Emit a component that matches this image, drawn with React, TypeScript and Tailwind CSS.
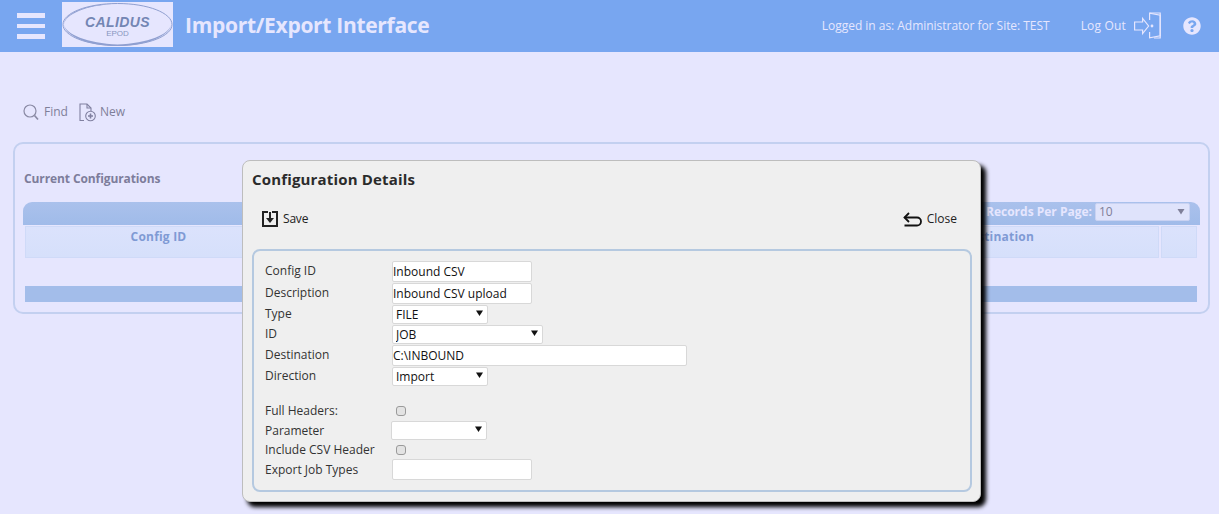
import React from "react";
import { FaQuestionCircle } from "react-icons/fa";

const font = "font-['Open_Sans','Noto_Sans',sans-serif]";

function Logo() {
  return (
    <div className="relative w-[111px] h-[45px] bg-[#e6e6fe] overflow-hidden">
      <svg className="absolute inset-0" width="111" height="45" viewBox="0 0 111 45">
        <path d="M1 22.5C1 11 25 1.5 55.5 1.5S110 11 110 22.5 86 43.5 55.5 43.5 1 34 1 22.5Z" fill="none" stroke="#8f9fd0" strokeWidth="1" />
        <path d="M2 22.5C3 32 26 41.5 55.5 42.5 86 41.5 108 32 109 22.5 108 34 84 44 55.5 44 26 44 3 34 2 22.5Z" fill="#8f9fd0" />
        <path d="M2 22.5C3 12 26 3 50 2.5 26 1.5 2 11 2 22.5Z" fill="#8f9fd0" />
      </svg>
      <div className="absolute left-0 right-0 top-[14px] text-center text-[14px] leading-[13px] font-bold italic tracking-[0.4px] text-[#7486b4] font-['Liberation_Sans',sans-serif]">CALIDUS</div>
      <div className="absolute left-0 right-0 top-[27px] text-center text-[8px] leading-[9px] text-[#8896c0] font-['Liberation_Sans',sans-serif]">EPOD</div>
    </div>
  );
}

function Field({ label, h, children }: { label: string; h: string; children: React.ReactNode }) {
  return (
    <div className={`flex items-center ${h}`}>
      <div className="w-[127px] shrink-0 text-[12px] leading-[16px] text-[#333]">{label}</div>
      {children}
    </div>
  );
}

function TextBox({ w, value }: { w: string; value: string }) {
  return (
    <input
      readOnly
      value={value}
      className={`${w} h-[21px] bg-white border border-[#d8d8d8] rounded-[2px] pl-0 text-[12px] text-[#111] outline-none`}
    />
  );
}

function Pick({ w, value, className = "" }: { w: string; value: string; className?: string }) {
  return (
    <div className={`relative ${w} h-[19px] ${className}`}>
      <select
        defaultValue={value}
        className="block appearance-none w-full h-full bg-white border border-[#d8d8d8] rounded-[2px] pl-[3px] text-[12px] text-[#111] outline-none"
      >
        <option>{value}</option>
      </select>
      <svg className="absolute right-[5px] top-[5px] pointer-events-none" width="7" height="6" viewBox="0 0 7 6">
        <path d="M0 0.5h7L3.5 6z" fill="#111" />
      </svg>
    </div>
  );
}

function Check() {
  return <div className="w-[10px] h-[10px] ml-[4px] rounded-[3px] bg-[#e3e3e3] border border-[#9a9a9a]" />;
}

export default function App() {
  return (
    <div className={`relative w-[1219px] h-[514px] overflow-hidden bg-[#e6e6fe] ${font}`}>
      {/* Header */}
      <header className="h-[52px] bg-[#78a6f0] flex items-center pl-[17px] text-[#e6e6fe]">
        <div className="flex flex-col gap-[6px] w-[28px]">
          <div className="h-[5px] bg-[#e6e6fe]" />
          <div className="h-[4px] bg-[#e6e6fe]" />
          <div className="h-[5px] bg-[#e6e6fe]" />
        </div>
        <div className="ml-[17px] -mt-[3px]"><Logo /></div>
        <div className="ml-[12px] text-[21px] leading-[28px] font-bold -mt-[2px] tracking-[-0.3px]">Import/Export Interface</div>
        <div className="ml-auto flex items-center text-[12px] pr-[18px]">
          <span className="tracking-[-0.03px]">Logged in as: Administrator for Site: TEST</span>
          <span className="ml-[31px] tracking-[0.18px]">Log Out</span>
          <svg className="ml-[8px] -mt-[2px]" width="27" height="27" viewBox="0 0 27 27" fill="none" stroke="#e6e6fe" strokeWidth="1.2">
            <path d="M0.6 10h8V6.5l6 7.5-6 7.5V18H0.6z" />
            <path d="M15.6 8V1.2l10.6 2v20.6l-10.6 2V20" />
            <path d="M15.6 1h10.6v25H20" />
            <circle cx="18" cy="14" r="0.8" fill="#e6e6fe" />
          </svg>
          <FaQuestionCircle className="ml-[22px]" size={18} />
        </div>
      </header>

      {/* Toolbar */}
      <div className="flex items-center h-[24px] mt-[48px] pl-[23px] text-[12px] text-[#7f7f99]">
        <svg width="16" height="17" viewBox="0 0 16 17" fill="none" stroke="#8a8aa4" strokeWidth="1.2">
          <circle cx="7" cy="7" r="6" />
          <path d="M11.5 11.5L15 15.5" strokeWidth="1.6" />
        </svg>
        <span className="ml-[5px]">Find</span>
        <svg className="ml-[11px]" width="17" height="19" viewBox="0 0 17 19" fill="none" stroke="#8080a0" strokeWidth="1.1">
          <path d="M5 17.5H1V1h7l4 4v3" />
          <path d="M8 1v4h4" />
          <circle cx="11.5" cy="13" r="4.8" />
          <path d="M9 13h5M11.5 10.5v5" strokeWidth="1.6" />
        </svg>
        <span className="ml-[4px] tracking-[0.05px]">New</span>
      </div>

      {/* Panel */}
      <section className="mx-[13px] mt-[18px] w-[1197px] h-[172px] border-2 border-[#c3d0f0] rounded-[10px] pt-[27px] pl-[8px] pr-[8px]">
        <div className="ml-[1px] text-[12px] leading-[16px] font-bold text-[#7d7d9b] tracking-[-0.1px]">Current Configurations</div>
        <div className="mt-[15px] h-[23px] w-[1177px] rounded-t-[9px] bg-gradient-to-b from-[#aac1ec] to-[#a0bbe9] flex items-start justify-end pt-[1px] pr-[10px]">
          <span className="text-[12px] leading-[18px] font-bold text-[#e6e6fe] tracking-[0px]">Records Per Page:</span>
          <div className="relative ml-[3px] w-[95px] h-[18px] bg-[#dfe3fb] rounded-[2px] border border-[#c9d2f2] text-[12px] leading-[16px] pl-[3px] text-[#7f7f99]">
            10
            <svg className="absolute right-[4px] top-[4px]" width="8" height="7" viewBox="0 0 8 7"><path d="M0.5 1h7L4 6.5z" fill="#7f7f99" /></svg>
          </div>
        </div>
        <div className="mt-[1px] ml-[2px] flex w-[1172px] h-[32px] gap-[2px]">
          <div className="w-[1134px] flex">
            <div className="w-[267px] text-center pt-[1px] text-[12px] font-bold text-[#7f9ad4] border border-[#cfdaf8] bg-gradient-to-b from-[#dbe2fc] to-[#d6e0fb] tracking-[0.2px]">Config ID</div>
            <div className="flex-1 text-right pr-[124px] pt-[1px] text-[12px] font-bold text-[#7f9ad4] border border-[#cfdaf8] bg-gradient-to-b from-[#dbe2fc] to-[#d6e0fb] tracking-[0.2px]">Destination</div>
          </div>
          <div className="flex-1 border border-[#cfdaf8] bg-gradient-to-b from-[#dbe2fc] to-[#d6e0fb]" />
        </div>
        <div className="mt-[28px] ml-[2px] w-[1172px] h-[16px] bg-[#a3bdea]" />
      </section>

      {/* Modal */}
      <div className="absolute left-[242px] top-[160px] w-[739px] h-[342px] bg-[#efefef] border border-[#bdbdbd] rounded-[8px] shadow-[5px_5px_4px_#000] pl-[8px] pr-[8px] pt-[7px]">
        <div className="ml-[1px] text-[15px] leading-[22px] font-bold text-[#2b2b2b] tracking-[0.17px]">Configuration Details</div>
        <div className="flex items-center justify-between h-[22px] mt-[18px] pl-[11px] pr-[15px] text-[12px] text-[#222]">
          <div className="flex items-center">
            <svg width="16" height="16" viewBox="0 0 16 16" fill="none">
              <path d="M6 1H1v14h14V1h-5" stroke="#222" strokeWidth="2" />
              <path d="M8 1v8" stroke="#222" strokeWidth="2" />
              <path d="M4 7h8l-4 5z" fill="#222" />
            </svg>
            <span className="ml-[5px] tracking-[-0.2px]">Save</span>
          </div>
          <div className="flex items-center">
            <svg width="19" height="15" viewBox="0 0 19 15" fill="none" stroke="#111" strokeWidth="1.8">
              <path d="M1.5 5.5H14a3.5 3.5 0 0 1 0 8H1.5" />
              <path d="M6 1L1.5 5.5 6 10" />
            </svg>
            <span className="ml-[5px]">Close</span>
          </div>
        </div>
        <div className="mt-[19px] ml-[1px] w-[720px] h-[243px] border-2 border-[#b5c9e0] rounded-[8px] pl-[11px] pt-[9px]">
          <Field label="Config ID" h="h-[22px]"><TextBox w="w-[140px]" value="Inbound CSV" /></Field>
          <Field label="Description" h="h-[22px]"><TextBox w="w-[140px]" value="Inbound CSV upload" /></Field>
          <Field label="Type" h="h-[20px]"><Pick w="w-[96px]" value="FILE" /></Field>
          <Field label="ID" h="h-[20px]"><Pick w="w-[151px]" value="JOB" /></Field>
          <Field label="Destination" h="h-[22px]"><TextBox w="w-[295px]" value="C:\INBOUND" /></Field>
          <Field label="Direction" h="h-[20px]"><Pick w="w-[96px]" value="Import" /></Field>
          <div className="h-[15px]" />
          <Field label="Full Headers:" h="h-[20px]"><Check /></Field>
          <Field label="Parameter" h="h-[19px]"><Pick w="w-[96px]" value="" className="-ml-[1px]" /></Field>
          <Field label="Include CSV Header" h="h-[19px]"><Check /></Field>
          <Field label="Export Job Types" h="h-[21px]"><TextBox w="w-[140px]" value="" /></Field>
        </div>
      </div>
    </div>
  );
}
